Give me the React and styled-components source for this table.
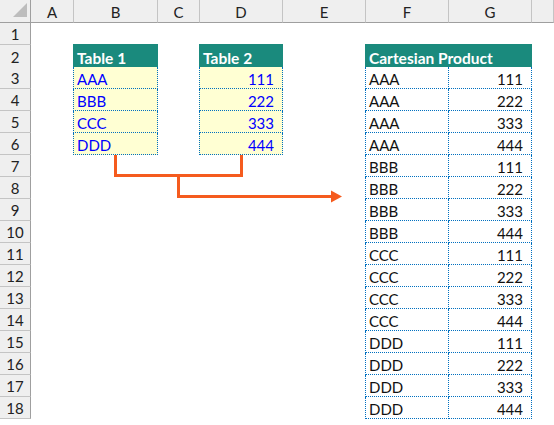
import React from "react";
import styled, { createGlobalStyle } from "styled-components";

const COLS = ["A", "B", "C", "D", "E", "F", "G", ""];
const TEMPLATE = "31px 43px 84px 42px 83px 83px 83px 83px 1fr";

const table1 = ["AAA", "BBB", "CCC", "DDD"];
const table2 = [111, 222, 333, 444];

const product = table1.flatMap((a) => table2.map((b) => [a, b]));

export default function App() {
  const rows = Array.from({ length: 18 }, (_, i) => i + 1);

  const renderCells = (r) => {
    const cells = [];
    // A
    cells.push(<Cell key="A" />);
    // B
    if (r === 2) cells.push(<Head key="B">Table 1</Head>);
    else if (r >= 3 && r <= 6)
      cells.push(
        <Input key="B" $left>
          {table1[r - 3]}
        </Input>
      );
    else cells.push(<Cell key="B" />);
    // C
    cells.push(<Cell key="C" />);
    // D
    if (r === 2) cells.push(<Head key="D">Table 2</Head>);
    else if (r >= 3 && r <= 6)
      cells.push(
        <Input key="D" $left $num>
          {table2[r - 3]}
        </Input>
      );
    else cells.push(<Cell key="D" />);
    // E
    cells.push(<Cell key="E" />);
    // F + G
    if (r === 2) {
      cells.push(
        <Head key="F" $span>
          Cartesian Product
        </Head>
      );
    } else if (r >= 3) {
      const [a, b] = product[r - 3];
      cells.push(
        <Output key="F" $left>
          {a}
        </Output>
      );
      cells.push(
        <Output key="G" $num>
          {b}
        </Output>
      );
    } else {
      cells.push(<Cell key="F" />);
      cells.push(<Cell key="G" />);
    }
    cells.push(<Cell key="H" />);
    return cells;
  };

  return (
    <>
      <GlobalStyle />
      <Sheet>
        <HeaderRow>
          <Corner />
          {COLS.map((c, i) => (
            <ColHead key={i}>{c}</ColHead>
          ))}
        </HeaderRow>
        {rows.map((r) => (
          <Row key={r}>
            <RowHead>{r}</RowHead>
            {renderCells(r)}
          </Row>
        ))}
        <Arrow width="554" height="425" viewBox="0 0 554 425">
          <polyline
            points="115.5,155 115.5,175.5 241.5,175.5 241.5,155"
            fill="none"
            stroke="#f55b1e"
            strokeWidth="3"
          />
          <polyline
            points="178.5,175.5 178.5,196.5 333,196.5"
            fill="none"
            stroke="#f55b1e"
            strokeWidth="3"
          />
          <polygon points="331,190.5 342,196.5 331,202.5" fill="#f55b1e" />
        </Arrow>
      </Sheet>
    </>
  );
}

const GlobalStyle = createGlobalStyle`
  html, body {
    margin: 0;
    padding: 0;
    background: #fff;
    overflow: hidden;
  }
  body {
    font-family: Lato, "Liberation Sans", sans-serif;
  }
`;

const Sheet = styled.div`
  position: relative;
  width: 554px;
  height: 425px;
  overflow: hidden;
  background: #fff;
`;

const HeaderRow = styled.div`
  display: grid;
  grid-template-columns: ${TEMPLATE};
  height: 23px;
`;

const Corner = styled.div`
  position: relative;
  background: #efefef;
  border-right: 1px solid #9f9f9f;
  border-bottom: 1px solid #9f9f9f;
  &::after {
    content: "";
    position: absolute;
    left: 13px;
    top: 3px;
    width: 14px;
    height: 14px;
    background: #bdbdbd;
    clip-path: polygon(100% 0, 100% 100%, 0 100%);
  }
`;

const ColHead = styled.div`
  display: flex;
  align-items: center;
  justify-content: center;
  background: #efefef;
  border-right: 1px solid #c4c4c4;
  border-bottom: 1px solid #9f9f9f;
  font-size: 15px;
  color: #222;
  padding-top: 1px;
`;

const Row = styled.div`
  display: grid;
  grid-template-columns: ${TEMPLATE};
  height: 22px;
`;

const RowHead = styled.div`
  display: flex;
  align-items: center;
  justify-content: center;
  background: #efefef;
  border-right: 1px solid #9f9f9f;
  border-bottom: 1px solid #c4c4c4;
  font-size: 15px;
  color: #222;
`;

const Cell = styled.div`
  min-width: 0;
`;

const Base = styled.div`
  display: flex;
  align-items: flex-end;
  justify-content: ${(p) => (p.$num ? "flex-end" : "flex-start")};
  padding: 0 ${(p) => (p.$num ? "8px" : "0")} 0 ${(p) => (p.$num ? "0" : "3px")};
  margin-left: ${(p) => (p.$left ? "-1px" : "0")};
  font-size: 15px;
  line-height: 18px;
  white-space: nowrap;
  border-bottom: 1px dotted #0070c0;
  border-right: 1px dotted #0070c0;
  border-left: ${(p) => (p.$left ? "1px dotted #0070c0" : "none")};
`;

const Input = styled(Base)`
  background: #ffffd3;
  color: #0000ff;
`;

const Output = styled(Base)`
  background: #fff;
  color: #111;
`;

const Head = styled.div`
  grid-column: ${(p) => (p.$span ? "span 2" : "auto")};
  display: flex;
  align-items: flex-end;
  margin-left: -1px;
  margin-top: -1px;
  height: 23px;
  padding-left: 4px;
  background: #1a8a7d;
  border-bottom: 2px solid #13665c;
  color: #fff;
  font-size: 15.5px;
  font-weight: 700;
  line-height: 18px;
  white-space: nowrap;
`;

const Arrow = styled.svg`
  position: absolute;
  left: 0;
  top: 0;
  pointer-events: none;
`;
